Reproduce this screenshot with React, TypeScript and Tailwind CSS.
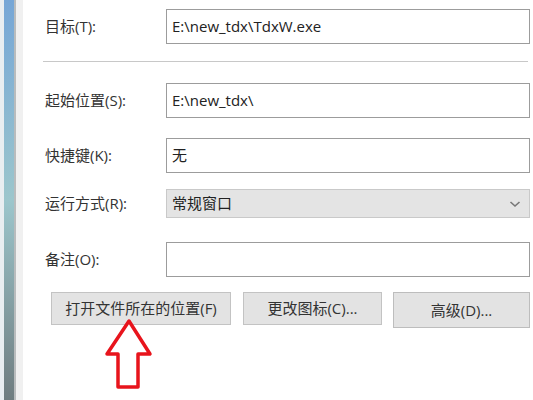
import React from 'react';

const font = { fontFamily: '"Open Sans", "Noto Sans CJK SC", sans-serif' };

function Field({ label, value, top }: { label: string; value?: string; top: string }) {
  return (
    <div className={`flex items-center ${top}`}>
      <span className="w-[121px] shrink-0 text-[15px] text-[#333]">{label}</span>
      <div className="w-[364px] h-[35px] border border-[#9c9c9c] bg-white flex items-center px-[5px] text-[15px] text-[#222]">
        {value}
      </div>
    </div>
  );
}

export default function App() {
  return (
    <div className="relative w-[533px] h-[400px] flex bg-white overflow-hidden" style={font}>
      {/* desktop edge behind the dialog */}
      <div className="w-[23px] h-full flex shrink-0">
        <div className="w-[4px] h-full bg-[#e9eef1]" />
        <div className="w-[10px] h-full bg-gradient-to-b from-[#76a6d6] via-[#9cc6cc] to-[#6f7d80]" />
        <div className="w-[2px] h-full bg-[#b9bcbd]" />
        <div className="w-[7px] h-full bg-[#f0f0f0]" />
      </div>

      <div className="flex-1 pl-[22px] pr-[3px] pt-[9px]">
        <Field label="目标(T):" value="E:\new_tdx\TdxW.exe" top="" />
        <div className="mt-[17px] mr-[2px] -ml-[2px] h-px bg-[#c8c8c8]" />
        <Field label="起始位置(S):" value="E:\new_tdx\" top="mt-[21px]" />
        <Field label="快捷键(K):" value="无" top="mt-[20px]" />

        <div className="flex items-center mt-[16px]">
          <span className="w-[121px] shrink-0 text-[15px] text-[#333]">运行方式(R):</span>
          <div className="w-[364px] h-[29px] border border-[#c9c9c9] bg-[#e4e4e4] flex items-center justify-between px-[5px] text-[15px] text-[#222]">
            <span>常规窗口</span>
            <svg width="12" height="8" viewBox="0 0 12 8" className="mr-[3px]">
              <path d="M1.5 2 L6 6 L10.5 2" fill="none" stroke="#777" strokeWidth="1.6" />
            </svg>
          </div>
        </div>

        <Field label="备注(O):" top="mt-[24px]" />

        <div className="flex mt-[15px] text-[15px] text-[#333]">
          <div className="ml-[6px] w-[180px] h-[33px] border border-[#c3c3c3] bg-[#e3e3e3] flex items-center justify-center">
            打开文件所在的位置(F)
          </div>
          <div className="ml-[12px] w-[139px] h-[33px] border border-[#c3c3c3] bg-[#e3e3e3] flex items-center justify-center">
            更改图标(C)...
          </div>
          <div className="ml-[11px] w-[137px] h-[36px] border border-[#bdbdbd] bg-[#e3e3e3] flex items-center justify-center">
            高级(D)...
          </div>
        </div>
      </div>

      {/* red annotation arrow */}
      <svg className="absolute left-[104px] top-[318px]" width="50" height="72" viewBox="0 0 50 72">
        <path
          d="M25 3 L46 36 L34 36 L34 69 L14 69 L14 36 L3 36 Z"
          fill="white"
          stroke="#e8141c"
          strokeWidth="3.5"
          strokeLinejoin="round"
        />
      </svg>
    </div>
  );
}
